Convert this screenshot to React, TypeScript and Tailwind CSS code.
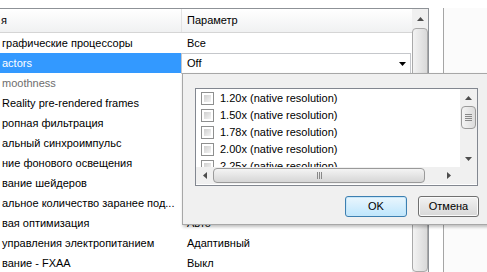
import React from 'react';

const rows = [
  { name: 'графические процессоры', value: 'Все' },
  { name: 'actors', value: 'Off', selected: true },
  { name: 'moothness', value: '', disabled: true },
  { name: 'Reality pre-rendered frames', value: '' },
  { name: 'ропная фильтрация', value: '' },
  { name: 'альный синхроимпульс', value: '' },
  { name: 'ние фонового освещения', value: '' },
  { name: 'вание шейдеров', value: '' },
  { name: 'альное количество заранее под...', value: '' },
  { name: 'вая оптимизация', value: 'Авто' },
  { name: 'управления электропитанием', value: 'Адаптивный' },
  { name: 'вание - FXAA', value: 'Выкл' },
];

const factors = ['1.20x', '1.50x', '1.78x', '2.00x', '2.25x'];

const Arrow = ({ dir, className = '' }: { dir: 'up' | 'down' | 'left' | 'right'; className?: string }) => {
  const pts = {
    up: '0,4 3.5,0 7,4',
    down: '0,0 7,0 3.5,4',
    left: '4,0 4,7 0,3.5',
    right: '0,0 0,7 4,3.5',
  }[dir];
  const w = dir === 'up' || dir === 'down' ? 7 : 4;
  const h = dir === 'up' || dir === 'down' ? 4 : 7;
  return (
    <svg width={w} height={h} viewBox={`0 0 ${w} ${h}`} className={className}>
      <polygon points={pts} fill="currentColor" />
    </svg>
  );
};

const Checkbox = () => (
  <div className="w-[13px] h-[13px] border border-[#8e8f8f] bg-white p-[2px] shrink-0">
    <div className="w-full h-full bg-gradient-to-br from-[#cfcfcf] to-[#f4f4f4]" />
  </div>
);

export default function App() {
  return (
    <div className="w-[487px] h-[272px] bg-white overflow-hidden relative font-['Liberation_Sans',Arial,sans-serif] text-[11px] text-black">
      <div className="flex h-full pt-2">
        {/* settings list */}
        <div className="w-[429px] h-full border-t border-r border-[#8e9297] flex">
          <div className="w-[412px]">
            {/* header */}
            <div className="h-[24px] flex border-b border-[#d5d5d5] bg-gradient-to-b from-white to-[#f0f1f2]">
              <div className="w-[182px] border-r border-[#e3e3e3] flex items-center pl-px">я</div>
              <div className="flex-1 flex items-center pl-[5px]">Параметр</div>
            </div>
            {rows.map((r) => (
              <div key={r.name} className="h-[20px] flex">
                <div
                  className={`w-[181px] flex items-center pl-[2px] whitespace-nowrap overflow-hidden ${
                    r.selected ? 'bg-[#3399ff] text-white' : r.disabled ? 'text-[#6d6d6d]' : ''
                  }`}
                >
                  {r.name}
                </div>
                {r.selected ? (
                  <div className="w-[230px] h-[21px] border border-[#c5c7cb] bg-white flex items-center pl-[5px] pr-[4px] justify-between">
                    <span>{r.value}</span>
                    <Arrow dir="down" className="text-black" />
                  </div>
                ) : (
                  <div className="flex-1 flex items-center pl-[6px]">{r.value}</div>
                )}
              </div>
            ))}
          </div>
          {/* vertical scrollbar */}
          <div className="w-[16px] flex flex-col bg-[#f0f0f0]">
            <div className="h-[19px] flex items-center justify-center text-[#4d4d4d]">
              <Arrow dir="up" />
            </div>
            <div className="flex-1 border border-[#a9a9a9] rounded-sm bg-gradient-to-r from-[#f3f3f3] to-[#d9d9d9]" />
          </div>
        </div>
        <div className="w-[14px]" />
        <div className="flex-1 border-l border-[#a5a5a5] bg-[#fbfbfb]" />
      </div>

      {/* dropdown popup */}
      <div className="absolute left-[182px] top-[73px] w-[310px] h-[152px] bg-[#f0f0f0] border border-[#a7a7a7] shadow-[1px_2px_3px_rgba(0,0,0,0.25)] pl-[12px] pt-[14px]">
        <div className="w-[283px] h-[98px] border border-[#828790] bg-white flex flex-col">
          <div className="flex h-[78px]">
            <div className="flex-1 overflow-hidden pt-px">
              {factors.map((f) => (
                <div key={f} className="h-[17px] flex items-center gap-[6px] pl-[5px] whitespace-nowrap">
                  <Checkbox />
                  <span>{f} (native resolution)</span>
                </div>
              ))}
            </div>
            <div className="w-[17px] bg-[#f0f0f0] flex flex-col items-center">
              <div className="h-[17px] flex items-center justify-center text-[#4d4d4d]">
                <Arrow dir="up" />
              </div>
              <div className="w-[15px] h-[23px] border border-[#9a9a9a] rounded-sm bg-gradient-to-r from-[#f4f4f4] to-[#dcdcdc] flex flex-col items-center justify-center gap-px">
                <div className="w-[7px] h-px bg-[#888]" />
                <div className="w-[7px] h-px bg-[#888]" />
                <div className="w-[7px] h-px bg-[#888]" />
                <div className="w-[7px] h-px bg-[#888]" />
              </div>
              <div className="flex-1" />
              <div className="h-[17px] flex items-center justify-center text-[#4d4d4d]">
                <Arrow dir="down" />
              </div>
            </div>
          </div>
          {/* horizontal scrollbar */}
          <div className="h-[17px] flex bg-[#f0f0f0]">
            <div className="w-[17px] flex items-center justify-center text-[#4d4d4d]">
              <Arrow dir="left" />
            </div>
            <div className="w-[212px] h-[15px] mt-px border border-[#9a9a9a] rounded-sm bg-gradient-to-b from-[#f4f4f4] to-[#d6d6d6] flex items-center justify-center gap-px">
              <div className="w-px h-[7px] bg-[#888]" />
              <div className="w-px h-[7px] bg-[#888]" />
              <div className="w-px h-[7px] bg-[#888]" />
            </div>
            <div className="flex-1 flex items-center justify-end pr-[9px] text-[#4d4d4d]">
              <Arrow dir="right" />
            </div>
            <div className="w-[17px] bg-[#f0f0f0]" />
          </div>
        </div>
        <div className="flex justify-start gap-[11px] mt-[10px] pl-[150px]">
          <button className="w-[62px] h-[21px] rounded-[3px] border border-[#3c7fb1] bg-gradient-to-b from-[#eaf6fd] to-[#bee6fd] shadow-[inset_0_0_0_1px_#c7e6f8] flex items-center justify-center">
            OK
          </button>
          <button className="w-[61px] h-[21px] rounded-[3px] border border-[#707070] bg-gradient-to-b from-[#f2f2f2] to-[#d8d8d8] shadow-[inset_0_0_0_1px_#fafafa] flex items-center justify-center">
            Отмена
          </button>
        </div>
      </div>
    </div>
  );
}
